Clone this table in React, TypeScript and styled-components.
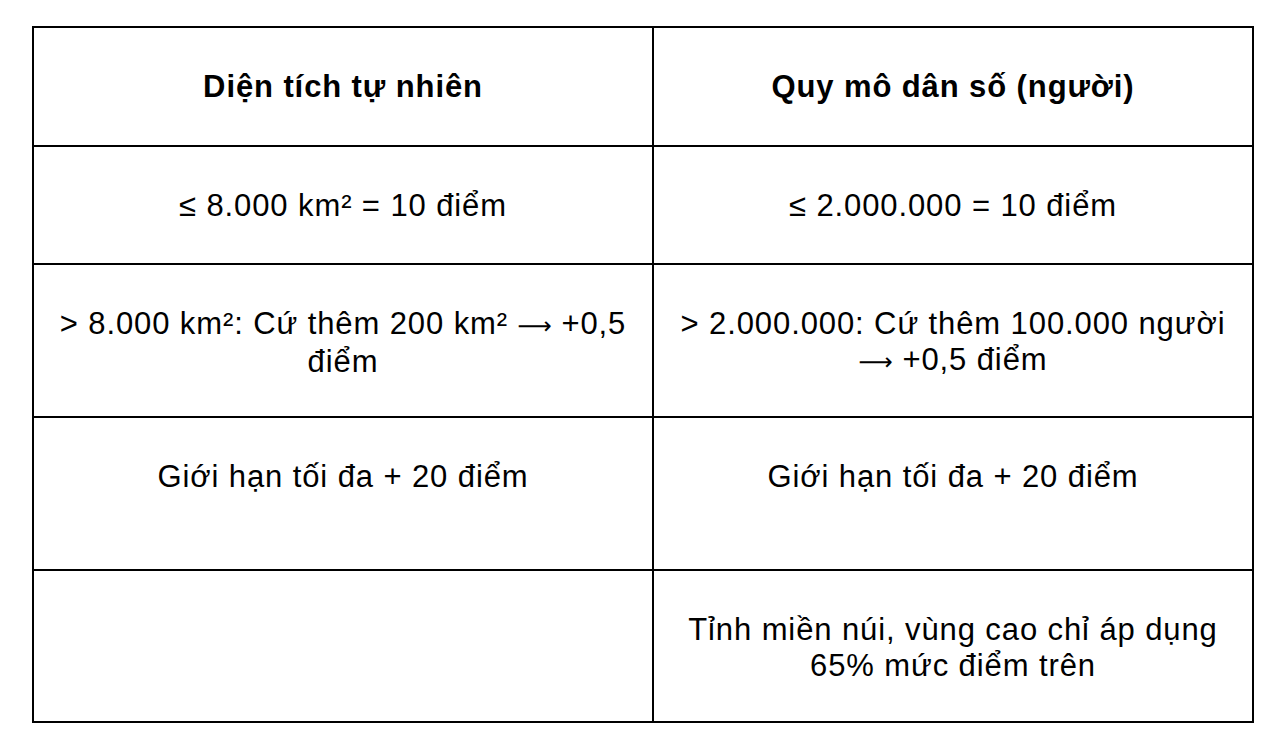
import styled, { createGlobalStyle } from "styled-components";

const GlobalStyle = createGlobalStyle`
  body {
    margin: 0;
    background: #ffffff;
    font-family: "Liberation Sans", Arial, sans-serif;
    color: #000;
  }
`;

const Page = styled.div`
  padding: 26px 0 0 32px;
`;

const Table = styled.table`
  width: 1220px;
  border-collapse: collapse;
  table-layout: fixed;
  border: 2px solid #000;
`;

const Col = styled.col<{ $width: number }>`
  width: ${(p) => p.$width}px;
`;

const Row = styled.tr<{ $height: number }>`
  height: ${(p) => p.$height}px;
`;

const HeadCell = styled.th`
  border: 2px solid #000;
  padding: 41px 22px 0;
  vertical-align: top;
  text-align: center;
  font-size: 31px;
  line-height: 36px;
  letter-spacing: 0.9px;
  font-weight: bold;
`;

const Cell = styled.td`
  border: 2px solid #000;
  padding: 41px 22px 0;
  vertical-align: top;
  text-align: center;
  font-size: 31px;
  line-height: 36px;
  letter-spacing: 0.9px;
  font-weight: normal;
`;

const Arrow = styled.span`
  font-family: "DejaVu Sans", sans-serif;
  font-size: 24px;
  letter-spacing: 0;
`;

const rows: { height: number; left: React.ReactNode; right: React.ReactNode }[] = [
  { height: 118, left: "≤ 8.000 km² = 10 điểm", right: "≤ 2.000.000 = 10 điểm" },
  {
    height: 153,
    left: (
      <>
        &gt; 8.000 km²: Cứ thêm 200 km² <Arrow>⟶</Arrow> +0,5 điểm
      </>
    ),
    right: (
      <>
        &gt; 2.000.000: Cứ thêm 100.000 người <Arrow>⟶</Arrow> +0,5 điểm
      </>
    ),
  },
  { height: 153, left: "Giới hạn tối đa + 20 điểm", right: "Giới hạn tối đa + 20 điểm" },
  { height: 152, left: "", right: "Tỉnh miền núi, vùng cao chỉ áp dụng 65% mức điểm trên" },
];

export default function App() {
  return (
    <>
      <GlobalStyle />
      <Page>
        <Table>
          <colgroup>
            <Col $width={620} />
            <Col $width={600} />
          </colgroup>
          <thead>
            <Row $height={119}>
              <HeadCell>Diện tích tự nhiên</HeadCell>
              <HeadCell>Quy mô dân số (người)</HeadCell>
            </Row>
          </thead>
          <tbody>
            {rows.map((r, i) => (
              <Row key={i} $height={r.height}>
                <Cell>{r.left}</Cell>
                <Cell>{r.right}</Cell>
              </Row>
            ))}
          </tbody>
        </Table>
      </Page>
    </>
  );
}
